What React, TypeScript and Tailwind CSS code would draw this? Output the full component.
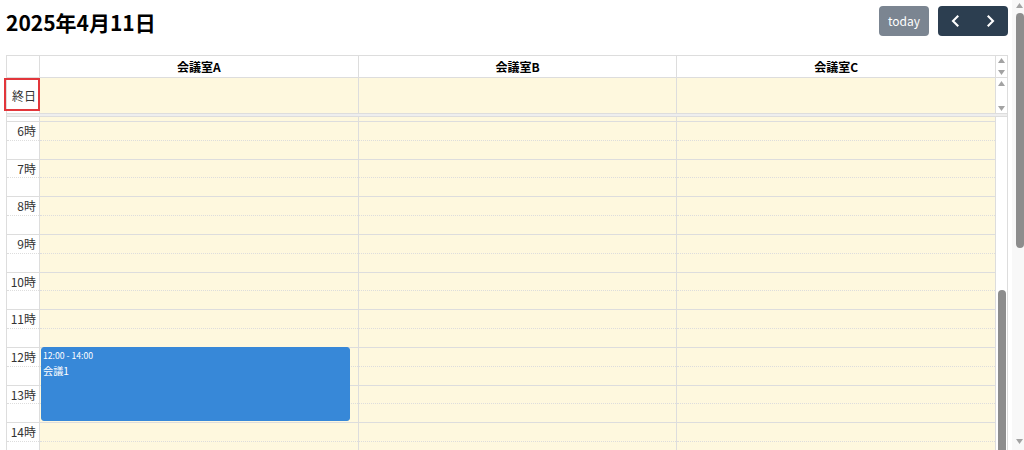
import { Fragment } from "react";

const HOURS = [6, 7, 8, 9, 10, 11, 12, 13, 14];
const RESOURCES = ["会議室A", "会議室B", "会議室C"];
const HOUR_PX = 37.667;

function Chevron({ dir }: { dir: "left" | "right" }) {
  return (
    <svg className="h-[12px] w-[9px]" viewBox="0 0 9 12" fill="none">
      <path
        d={dir === "left" ? "M6.5 1.5 2 6l4.5 4.5" : "M2.5 1.5 7 6l-4.5 4.5"}
        stroke="currentColor"
        strokeWidth="2.1"
        strokeLinecap="square"
      />
    </svg>
  );
}

function Arrow({ dir }: { dir: "up" | "down" }) {
  return (
    <svg className="h-[5px] w-[7px]" viewBox="0 0 7 5">
      <path d={dir === "up" ? "M3.5 0 7 5H0z" : "M0 0h7L3.5 5z"} fill="#a3a3a3" />
    </svg>
  );
}

function SlotColumn({ children }: { children?: React.ReactNode }) {
  return (
    <div className="relative flex-1 border-r border-[#ddd] bg-[#fef8de]">
      <div className="h-[4px]" />
      {HOURS.map((h) => (
        <Fragment key={h}>
          <div className="h-[18.833px] border-t border-[#ddd]" />
          <div className="h-[18.833px] border-t border-dotted border-[#ddd]" />
        </Fragment>
      ))}
      {children}
    </div>
  );
}

export default function App() {
  return (
    <div className="flex h-[450px] overflow-hidden bg-white font-['Noto_Sans_CJK_JP',sans-serif] text-[12px] text-[#222]">
      <div className="min-w-0 flex-1 pt-[6px] pr-[4px] pl-[6px]">
        {/* toolbar */}
        <div className="mb-[19px] flex h-[30px] items-center justify-between">
          <h2 className="pt-[2px] text-[21px] leading-none font-bold text-black">
            2025年4月11日
          </h2>
          <div className="flex items-center gap-[9px]">
            <button
              className="h-[30px] rounded-[4px] bg-[#7b8591] px-[9px] text-[12px] text-white"
              type="button"
            >
              today
            </button>
            <div className="flex h-[30px] overflow-hidden rounded-[4px] bg-[#2c3e50] text-white">
              <button className="flex w-[35px] items-center justify-center" type="button">
                <Chevron dir="left" />
              </button>
              <button className="flex w-[35px] items-center justify-center" type="button">
                <Chevron dir="right" />
              </button>
            </div>
          </div>
        </div>

        {/* calendar */}
        <div className="relative border-x border-t border-[#ddd]">
          {/* header */}
          <div className="flex h-[22px] border-b border-[#ddd]">
            <div className="w-[33px] shrink-0 border-r border-[#ddd]" />
            {RESOURCES.map((r) => (
              <div
                key={r}
                className="flex flex-1 items-center justify-center border-r border-[#ddd] font-bold text-black"
              >
                {r}
              </div>
            ))}
            <div className="flex w-[11px] shrink-0 flex-col items-center justify-between py-[2px]">
              <Arrow dir="up" />
              <Arrow dir="down" />
            </div>
          </div>

          {/* all-day */}
          <div className="flex h-[35px]">
            <div className="flex w-[33px] shrink-0 items-center justify-end border-r border-[#ddd] pr-[3px] text-[#333]">
              終日
            </div>
            {RESOURCES.map((r) => (
              <div key={r} className="flex-1 border-r border-[#ddd] bg-[#fef8de]" />
            ))}
            <div className="flex w-[11px] shrink-0 flex-col items-center justify-between pt-[3px] pb-[2px]">
              <Arrow dir="up" />
              <Arrow dir="down" />
            </div>
          </div>

          {/* divider */}
          <div className="h-[4px] border-y border-[#ddd] bg-[#eeeeee]" />

          {/* time grid */}
          <div className="flex h-[333px] overflow-hidden">
            <div className="w-[33px] shrink-0 border-r border-[#ddd]">
              <div className="h-[4px]" />
              {HOURS.map((h) => (
                <Fragment key={h}>
                  <div className="flex h-[18.833px] items-center justify-end border-t border-[#ddd] pr-[3px] text-[#333]">
                    {h}時
                  </div>
                  <div className="h-[18.833px] border-t border-dotted border-[#ddd]" />
                </Fragment>
              ))}
            </div>
            <SlotColumn>
              <div
                className="absolute right-[2.5%] left-[1px] h-[73.5px] rounded-[3px] border border-[#3788d8] bg-[#3788d8] px-[1px] pt-[1px] text-white"
                style={{ top: 4 + 6 * HOUR_PX }}
              >
                <div className="mb-[1px] text-[8.67px] leading-[1.5]">12:00 - 14:00</div>
                <div className="text-[10.2px] leading-[1.5]">会議1</div>
              </div>
            </SlotColumn>
            <SlotColumn />
            <SlotColumn />
            <div className="flex w-[11px] shrink-0 flex-col items-center pt-[5px]">
              <Arrow dir="up" />
              <div className="mt-[168px] h-[200px] w-[8px] shrink-0 rounded-full bg-[#8d8d8d]" />
            </div>
          </div>

          {/* 終日セルの強調枠 */}
          <div className="pointer-events-none absolute top-[22px] left-[-3px] h-[33px] w-[36px] border-2 border-[#e2363b]" />
        </div>
      </div>

      {/* page scrollbar */}
      <div className="flex w-[12px] shrink-0 flex-col items-center bg-[#f8f8f8] pt-[3px] pb-[6px] pl-[3px]">
        <Arrow dir="up" />
        <div className="mt-[5px] h-[235px] w-[8px] rounded-full bg-[#8d8d8d]" />
        <div className="flex-1" />
        <Arrow dir="down" />
      </div>
    </div>
  );
}
